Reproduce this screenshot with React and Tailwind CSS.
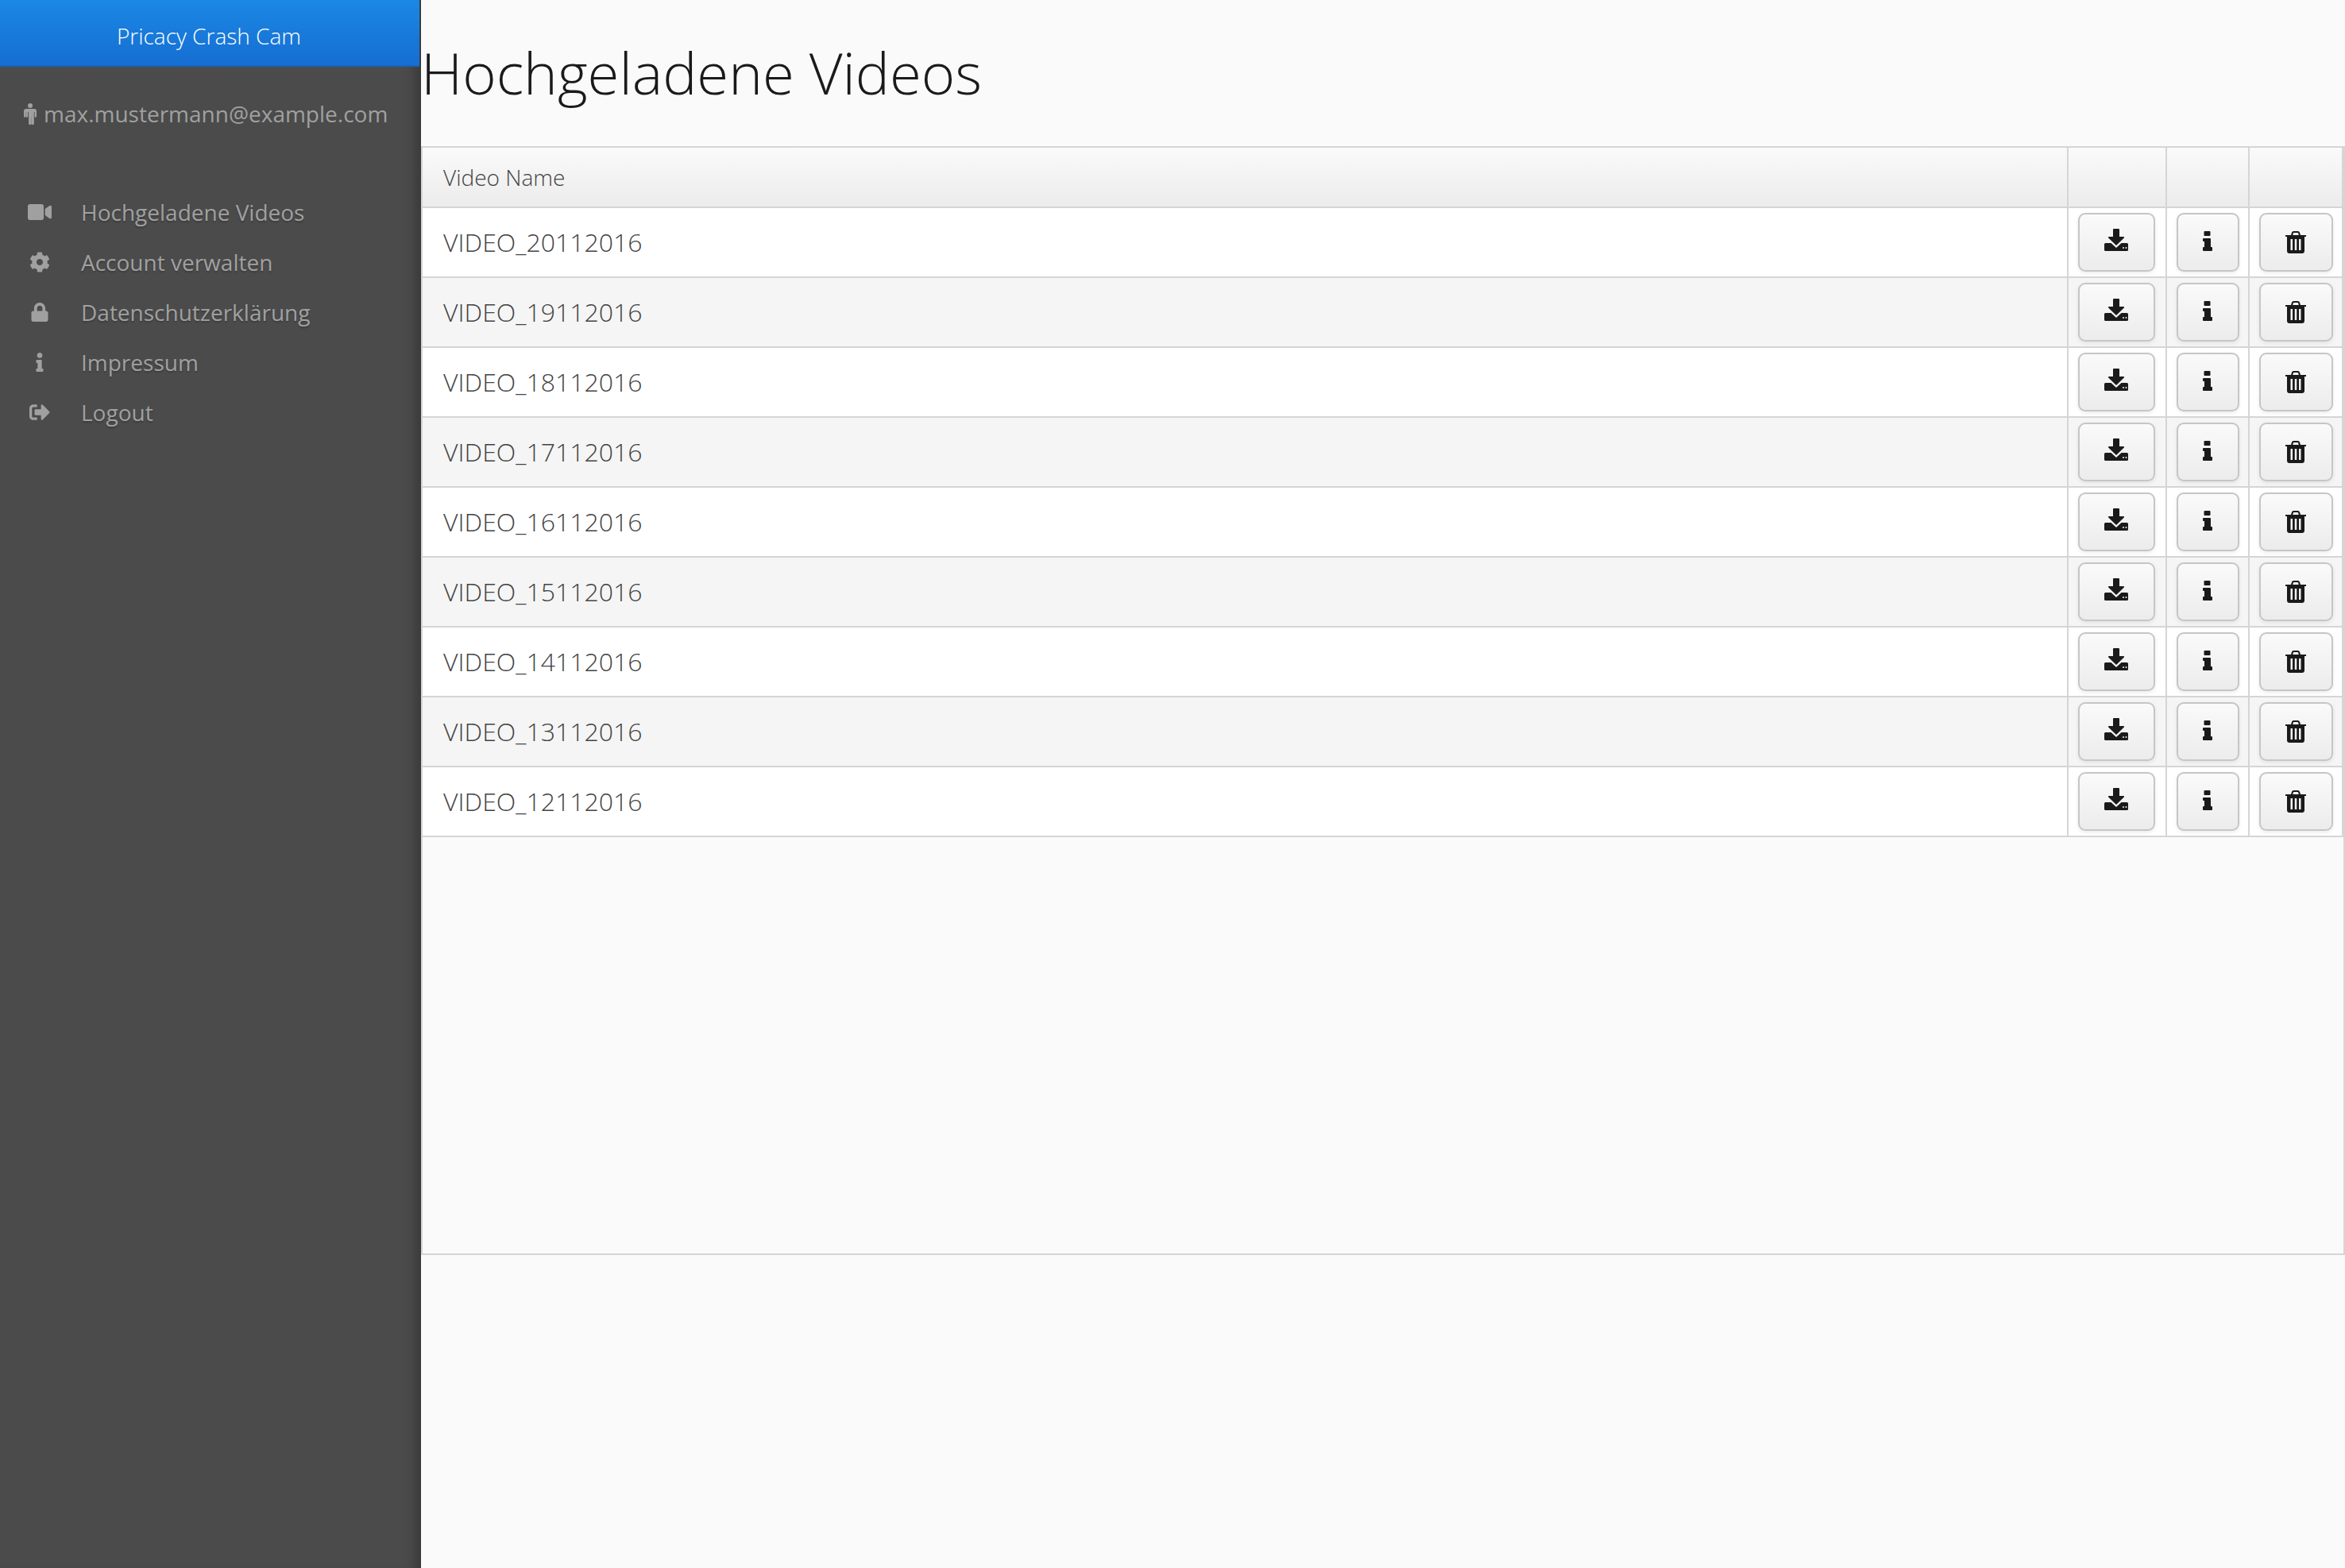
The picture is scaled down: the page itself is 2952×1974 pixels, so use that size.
import React from "react";
import { FaVideo, FaCog, FaLock, FaInfo, FaSignOutAlt } from "react-icons/fa";

const nav = [
  [FaVideo, "Hochgeladene Videos", "w-[30px] h-[30px]"],
  [FaCog, "Account verwalten", "w-[26px] h-[26px]"],
  [FaLock, "Datenschutzerklärung", "w-[22px] h-[24px]"],
  [FaInfo, "Impressum", "w-[24px] h-[24px]"],
  [FaSignOutAlt, "Logout", "w-[26px] h-[26px]"],
];

const videos = ["20", "19", "18", "17", "16", "15", "14", "13", "12"].map((d) => `VIDEO_${d}112016`);

function MaleIcon() {
  return (
    <svg viewBox="0 0 16 27" className="w-[16px] h-[27px] mr-[9px] shrink-0" fill="currentColor">
      <circle cx="8" cy="3" r="3" />
      <path d="M3 7h10a3 3 0 0 1 3 3v6.500a1.200 1.200 0 0 1-2.400 0V11h-.8v14.800a1.200 1.200 0 0 1-1.200 1.200h-.8a1.200 1.200 0 0 1-1.200-1.200V17.500h-.2v8.300A1.200 1.200 0 0 1 8.200 27h-.9a1.200 1.200 0 0 1-1.200-1.200V11h-.9v5.500a1.200 1.200 0 0 1-2.400 0V11h-.3v5.500A1.200 1.200 0 0 1 0 16.500V10a3 3 0 0 1 3-3z" />
    </svg>
  );
}

function DownloadIcon() {
  return (
    <svg viewBox="0 0 30 28" className="w-[30px] h-[28px] -mt-[6px] text-[#1a1a1a]" fill="currentColor">
      <path d="M11 1a1 1 0 0 1 1-1h6a1 1 0 0 1 1 1v9h5.200a.8.8 0 0 1 .6 1.400L15 21 5.200 11.400a.8.8 0 0 1 .6-1.400H11z" />
      <path fillRule="evenodd" d="M1.500 18H8.500l6.500 6 6.500-6h7a1.500 1.500 0 0 1 1.500 1.500v7a1.500 1.500 0 0 1-1.500 1.500h-27A1.500 1.500 0 0 1 0 26.500v-7A1.500 1.500 0 0 1 1.500 18zM24 23a1 1 0 1 0 0 2 1 1 0 0 0 0-2zm3.500 0a1 1 0 1 0 0 2 1 1 0 0 0 0-2z" />
    </svg>
  );
}

function TrashIcon() {
  return (
    <svg viewBox="0 0 26 28" className="w-[26px] h-[28px] -mt-[1px] text-[#1a1a1a]" fill="currentColor">
      <path fillRule="evenodd" d="M0 5h7l1-3.200C8.400.7 9.300 0 10.300 0h5.400c1 0 1.900.7 2.300 1.800L19 5h7v2h-2v18c0 1.700-1.300 3-3 3H5c-1.700 0-3-1.300-3-3V7H0zM9.200 5h7.600l-.7-2.500a.6.600 0 0 0-.5-.4h-5.200a.6.600 0 0 0-.5.4zM6.500 10v14H9V10zm5.250 0v14h2.500V10zM17 10v14h2.500V10z" />
    </svg>
  );
}

function InfoIcon() {
  return (
    <svg viewBox="0 0 12 25" className="w-[12px] h-[25px] -mt-[3px] text-[#1a1a1a]" fill="currentColor">
      <path d="M2.500 0h6A1 1 0 0 1 9.500 1v4a1 1 0 0 1-1 1h-6a1 1 0 0 1-1-1V1a1 1 0 0 1 1-1zM1 9h8a1 1 0 0 1 1 1v10h1a1 1 0 0 1 1 1v3a1 1 0 0 1-1 1H1a1 1 0 0 1-1-1v-3a1 1 0 0 1 1-1h1v-7H1a1 1 0 0 1-1-1v-2a1 1 0 0 1 1-1z" />
    </svg>
  );
}

function ActionButton({ className, children }) {
  return (
    <button className={`h-[74px] flex items-center justify-center rounded-[9px] border-2 border-[#c6c6c6] bg-gradient-to-b from-[#fafafa] to-[#ececec] shadow-[0_2px_5px_rgba(0,0,0,0.08)] ${className}`}>
      {children}
    </button>
  );
}

export default function App() {
  return (
    <div className="flex h-[1974px] w-[2952px] overflow-hidden bg-[#fafafa] text-[#555]" style={{ fontFamily: '"Open Sans", sans-serif' }}>
      <aside className="w-[530px] shrink-0 bg-[#4b4b4b] shadow-[inset_-18px_0_16px_-12px_rgba(0,0,0,0.28)]">
        <div className="h-[84px] w-[528px] pt-[8px] pr-[2px] flex items-center justify-center border-b-2 border-[#1465c4] bg-gradient-to-b from-[#1b88e4] to-[#166ed2] text-[28px] font-light text-white">
          Pricacy Crash Cam
        </div>
        <div className="flex h-[26px] items-center mt-[46px] pl-[30px] text-[28px] text-[#a0a0a0]">
          <MaleIcon />
          <span className="leading-none">max.mustermann@example.com</span>
        </div>
        <nav className="mt-[79px] flex flex-col">
          {nav.map(([Icon, label, size]) => (
            <div key={label} className="flex h-[63px] items-center text-[28px] text-[#a0a0a0] [text-shadow:0_2px_2px_rgba(0,0,0,0.2)]">
              <span className="w-[102px] flex justify-center pr-[2px]">
                <Icon className={`${size}`} />
              </span>
              <span>{label}</span>
            </div>
          ))}
        </nav>
      </aside>

      <main className="flex-1 min-w-0 flex flex-col">
        <h1 className="h-[184px] pt-[41px] text-[72.5px] font-light leading-[100px] text-[#1a1a1a]">
          Hochgeladene Videos
        </h1>
        <div className="h-[1396px] border-2 border-[#d5d5d5] pr-0">
          <div className="border-r-2 border-[#d5d5d5] h-[868px]">
            <div className="flex h-[76px] border-b-2 border-[#d5d5d5] bg-gradient-to-b from-[#fafafa] to-[#ececec]">
              <div className="flex-1 flex items-center pl-[26px] text-[28px] font-light text-[#444]">Video Name</div>
              <div className="w-[124px] border-l-2 border-[#d5d5d5]" />
              <div className="w-[104px] border-l-2 border-[#d5d5d5]" />
              <div className="w-[118px] border-l-2 border-[#d5d5d5]" />
            </div>
            {videos.map((name, i) => (
              <div key={name} className={`flex h-[88px] border-b-2 border-[#d5d5d5] ${i % 2 === 0 ? "bg-white" : "bg-[#f5f5f5]"}`}>
                <div className="flex-1 flex items-center pl-[26px] pb-[1px] text-[32px] font-light text-[#444]">{name}</div>
                <div className="w-[124px] border-l-2 border-[#d5d5d5] flex items-center justify-center pr-[2px]">
                  <ActionButton className="w-[97px]"><DownloadIcon /></ActionButton>
                </div>
                <div className="w-[104px] border-l-2 border-[#d5d5d5] flex items-center justify-center">
                  <ActionButton className="w-[79px]"><InfoIcon /></ActionButton>
                </div>
                <div className="w-[118px] border-l-2 border-[#d5d5d5] flex items-center justify-center">
                  <ActionButton className="w-[93px]"><TrashIcon /></ActionButton>
                </div>
              </div>
            ))}
          </div>
        </div>
      </main>
    </div>
  );
}
